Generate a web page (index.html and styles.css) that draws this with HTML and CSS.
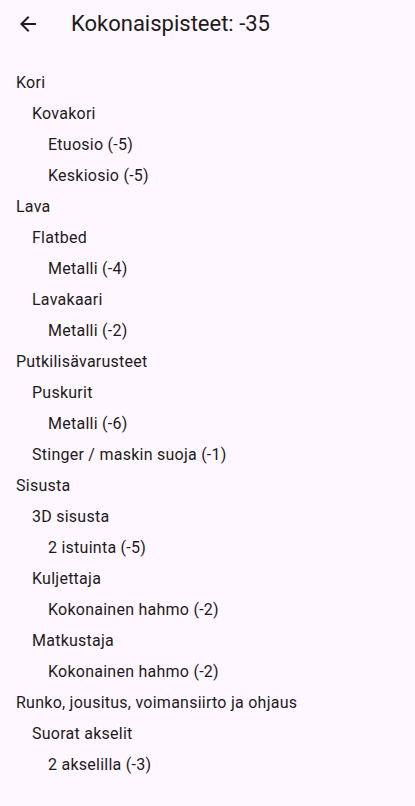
FILE: index.html
```html
<!DOCTYPE html>
<html>
    <head>
        <meta charset="utf-8">
        <link rel="stylesheet" href="styles.css">
    </head>
    <body>
        <div class="appbar">
            <button class="back">
                <svg width="24" height="24" viewBox="0 0 24 24"><path d="M20 11H7.83l5.59-5.59L12 4l-8 8 8 8 1.41-1.41L7.83 13H20v-2z" fill="#1d1b20"/></svg>
            </button>
            <h1 class="title">Kokonaispisteet: -35</h1>
        </div>

        <div class="list">
            <div class="row lvl0">Kori</div>
            <div class="row lvl1">Kovakori</div>
            <div class="row lvl2">Etuosio (-5)</div>
            <div class="row lvl2">Keskiosio (-5)</div>
            <div class="row lvl0">Lava</div>
            <div class="row lvl1">Flatbed</div>
            <div class="row lvl2">Metalli (-4)</div>
            <div class="row lvl1">Lavakaari</div>
            <div class="row lvl2">Metalli (-2)</div>
            <div class="row lvl0">Putkilisävarusteet</div>
            <div class="row lvl1">Puskurit</div>
            <div class="row lvl2">Metalli (-6)</div>
            <div class="row lvl1">Stinger / maskin suoja (-1)</div>
            <div class="row lvl0">Sisusta</div>
            <div class="row lvl1">3D sisusta</div>
            <div class="row lvl2">2 istuinta (-5)</div>
            <div class="row lvl1">Kuljettaja</div>
            <div class="row lvl2">Kokonainen hahmo (-2)</div>
            <div class="row lvl1">Matkustaja</div>
            <div class="row lvl2">Kokonainen hahmo (-2)</div>
            <div class="row lvl0">Runko, jousitus, voimansiirto ja ohjaus</div>
            <div class="row lvl1">Suorat akselit</div>
            <div class="row lvl2">2 akselilla (-3)</div>
        </div>
    </body>
</html>
```

FILE: styles.css
```css
body{
    margin:0;
    background-color: #fef7ff;
    color:#1d1b20;
    font-family: Roboto, "Noto Sans", sans-serif;
}
.appbar{
    display:flex;
    align-items: center;
    height:47px;
}
.back{
    width:48px;
    height:48px;
    margin-left:4px;
    padding:0;
    border:none;
    background: none;
    display:flex;
    align-items: center;
    justify-content: center;
}
.back svg{
    display:block;
}
.title{
    margin:0 0 0 19px;
    font-size:22px;
    font-weight: 400;
    line-height: 28px;
}
.list{
    padding-top:20px;
}
.row{
    height:31px;
    line-height: 31px;
    font-size:16px;
    letter-spacing: 0.25px;
    padding-left:16px;
}
.lvl1{
    padding-left:32px;
}
.lvl2{
    padding-left:48px;
}
```
